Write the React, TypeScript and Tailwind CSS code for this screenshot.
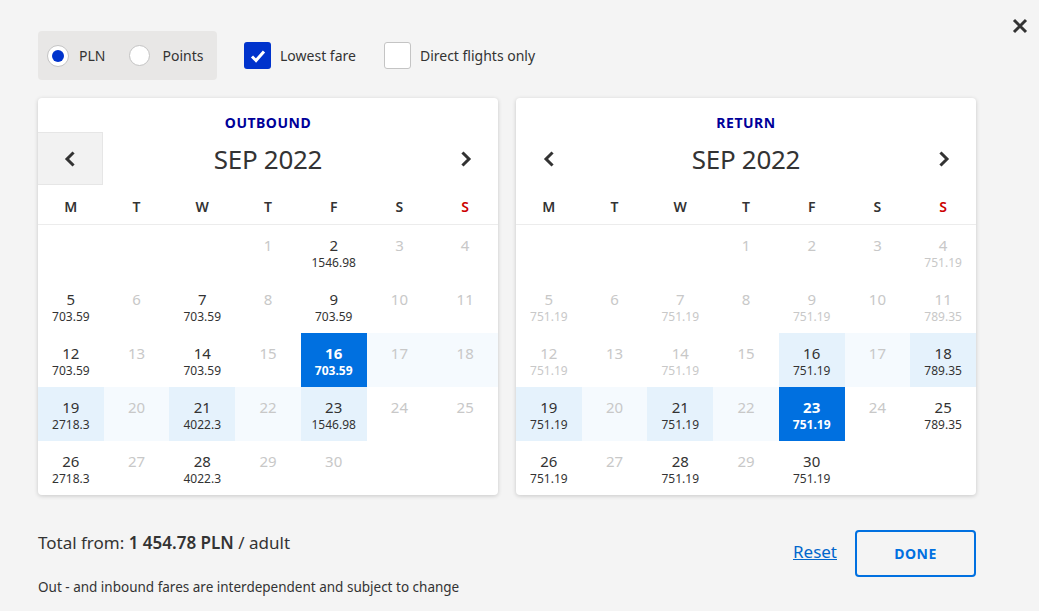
import React from 'react';

type Cell = { d: number; p?: string; muted?: boolean; bg?: 'range' | 'soft' | 'sel' } | null;

const FONT = "font-['Noto_Sans',sans-serif]";

const OUTBOUND: Cell[] = [
  null, null, null,
  { d: 1, muted: true }, { d: 2, p: '1546.98' }, { d: 3, muted: true }, { d: 4, muted: true },
  { d: 5, p: '703.59' }, { d: 6, muted: true }, { d: 7, p: '703.59' }, { d: 8, muted: true },
  { d: 9, p: '703.59' }, { d: 10, muted: true }, { d: 11, muted: true },
  { d: 12, p: '703.59' }, { d: 13, muted: true }, { d: 14, p: '703.59' }, { d: 15, muted: true },
  { d: 16, p: '703.59', bg: 'sel' }, { d: 17, muted: true, bg: 'soft' }, { d: 18, muted: true, bg: 'soft' },
  { d: 19, p: '2718.3', bg: 'range' }, { d: 20, muted: true, bg: 'soft' }, { d: 21, p: '4022.3', bg: 'range' },
  { d: 22, muted: true, bg: 'soft' }, { d: 23, p: '1546.98', bg: 'range' }, { d: 24, muted: true }, { d: 25, muted: true },
  { d: 26, p: '2718.3' }, { d: 27, muted: true }, { d: 28, p: '4022.3' }, { d: 29, muted: true }, { d: 30, muted: true },
  null, null,
];

const RETURN: Cell[] = [
  null, null, null,
  { d: 1, muted: true }, { d: 2, muted: true }, { d: 3, muted: true }, { d: 4, p: '751.19', muted: true },
  { d: 5, p: '751.19', muted: true }, { d: 6, muted: true }, { d: 7, p: '751.19', muted: true }, { d: 8, muted: true },
  { d: 9, p: '751.19', muted: true }, { d: 10, muted: true }, { d: 11, p: '789.35', muted: true },
  { d: 12, p: '751.19', muted: true }, { d: 13, muted: true }, { d: 14, p: '751.19', muted: true }, { d: 15, muted: true },
  { d: 16, p: '751.19', bg: 'range' }, { d: 17, muted: true, bg: 'soft' }, { d: 18, p: '789.35', bg: 'range' },
  { d: 19, p: '751.19', bg: 'range' }, { d: 20, muted: true, bg: 'soft' }, { d: 21, p: '751.19', bg: 'range' },
  { d: 22, muted: true, bg: 'soft' }, { d: 23, p: '751.19', bg: 'sel' }, { d: 24, muted: true }, { d: 25, p: '789.35' },
  { d: 26, p: '751.19' }, { d: 27, muted: true }, { d: 28, p: '751.19' }, { d: 29, muted: true }, { d: 30, p: '751.19' },
  null, null,
];

const DAYS = ['M', 'T', 'W', 'T', 'F', 'S', 'S'];

const Chevron: React.FC<{ dir: 'left' | 'right' }> = ({ dir }) => (
  <svg width="12" height="16" viewBox="0 0 12 16" fill="none">
    <path
      d={dir === 'left' ? 'M8.5 2.5 L3 8 L8.5 13.5' : 'M3.5 2.5 L9 8 L3.5 13.5'}
      stroke="#333"
      strokeWidth="3"
      strokeLinecap="square"
    />
  </svg>
);

const DayCell: React.FC<{ cell: Cell }> = ({ cell }) => {
  if (!cell) return <div className="h-[54px]" />;
  const bg =
    cell.bg === 'sel' ? 'bg-[#0070e0]' : cell.bg === 'range' ? 'bg-[#e5f2fc]' : cell.bg === 'soft' ? 'bg-[#f5fafe]' : '';
  const color = cell.bg === 'sel' ? 'text-white font-bold' : cell.muted ? 'text-[#c8c8c8]' : 'text-[#333]';
  return (
    <div className={`h-[54px] flex flex-col items-center pt-[12px] ${bg} ${color}`}>
      <span className="text-[15px] leading-[17px]">{cell.d}</span>
      {cell.p && <span className="text-[12px] leading-[13px] mt-[2px]">{cell.p}</span>}
    </div>
  );
};

const Calendar: React.FC<{ title: string; cells: Cell[]; prevHover?: boolean }> = ({ title, cells, prevHover }) => (
  <div className="w-[460px] bg-white rounded-[4px] shadow-[0_1px_4px_rgba(0,0,0,0.18)] overflow-hidden">
    <div className="h-[34px] pt-[16px] text-center text-[14px] leading-[17px] font-bold tracking-[0.5px] text-[#000099]">
      {title}
    </div>
    <div className="h-[53px] flex items-center justify-between">
      <div className={`w-[65px] h-full flex items-center justify-center ${prevHover ? 'bg-[#f2f2f2] border border-[#e6e6e6] border-l-0' : ''}`}>
        <Chevron dir="left" />
      </div>
      <div className="text-[26px] leading-none text-[#333] tracking-[-0.3px]">SEP 2022</div>
      <div className="w-[65px] h-full flex items-center justify-center">
        <Chevron dir="right" />
      </div>
    </div>
    <div className="h-[39px] grid grid-cols-7 items-center pt-[3px]">
      {DAYS.map((d, i) => (
        <div key={i} className={`text-center text-[14px] font-semibold ${i === 6 ? 'text-[#cc0000]' : 'text-[#333]'}`}>
          {d}
        </div>
      ))}
    </div>
    <div className="grid grid-cols-7 border-t border-[#ececec]">
      {cells.map((c, i) => (
        <DayCell key={i} cell={c} />
      ))}
    </div>
  </div>
);

const App: React.FC = () => {
  return (
    <div className={`${FONT} w-[1039px] h-[611px] bg-[#f4f4f4] relative pl-[38px] pt-[31px] text-[#333]`}>
      <button className="absolute right-[10px] top-[17px] w-[18px] h-[18px] flex items-center justify-center">
        <svg width="16" height="16" viewBox="0 0 16 16">
          <path d="M2 2 L14 14 M14 2 L2 14" stroke="#333" strokeWidth="3" />
        </svg>
      </button>

      {/* Filters */}
      <div className="flex items-center">
        <div className="w-[179px] h-[49px] bg-[#e8e7e6] rounded-[4px] flex items-center pl-[9px]">
          <span className="w-[22px] h-[22px] rounded-full bg-white border border-[#c4c4c4] flex items-center justify-center">
            <span className="w-[12px] h-[12px] rounded-full bg-[#0033cc]" />
          </span>
          <span className="ml-[10px] text-[14px]">PLN</span>
          <span className="ml-[24px] w-[21px] h-[21px] rounded-full bg-white border border-[#c4c4c4]" />
          <span className="ml-[12px] text-[14px]">Points</span>
        </div>
        <div className="ml-[27px] flex items-center">
          <span className="w-[27px] h-[27px] rounded-[3px] bg-[#0033cc] flex items-center justify-center">
            <svg width="16" height="14" viewBox="0 0 16 14">
              <path d="M2 7.5 L6 11.5 L14 2.5" stroke="white" strokeWidth="3" fill="none" />
            </svg>
          </span>
          <span className="ml-[9px] text-[14px]">Lowest fare</span>
        </div>
        <div className="ml-[28px] flex items-center">
          <span className="w-[27px] h-[27px] rounded-[3px] bg-white border border-[#c4c4c4]" />
          <span className="ml-[9px] text-[14px]">Direct flights only</span>
        </div>
      </div>

      {/* Calendars */}
      <div className="mt-[18px] flex gap-[18px]">
        <Calendar title="OUTBOUND" cells={OUTBOUND} prevHover />
        <Calendar title="RETURN" cells={RETURN} />
      </div>

      {/* Footer */}
      <div className="flex items-start w-[938px] mt-[37px]">
        <div className="flex-1">
          <div className="text-[17px] leading-[22px]">
            Total from: <span className="font-semibold">1 454.78 PLN</span> / adult
          </div>
          <div className="mt-[24px] text-[13.5px] leading-[18px]">
            Out - and inbound fares are interdependent and subject to change
          </div>
        </div>
        <a href="#" className="mt-[9px] mr-[18px] text-[17px] leading-[22px] text-[#0066cc] underline">
          Reset
        </a>
        <button className="w-[121px] h-[47px] -mt-[2px] border-2 border-[#0070e0] rounded-[4px] text-[#0070e0] font-bold text-[14px] tracking-[0.5px] bg-transparent">
          DONE
        </button>
      </div>
    </div>
  );
};

export default App;
